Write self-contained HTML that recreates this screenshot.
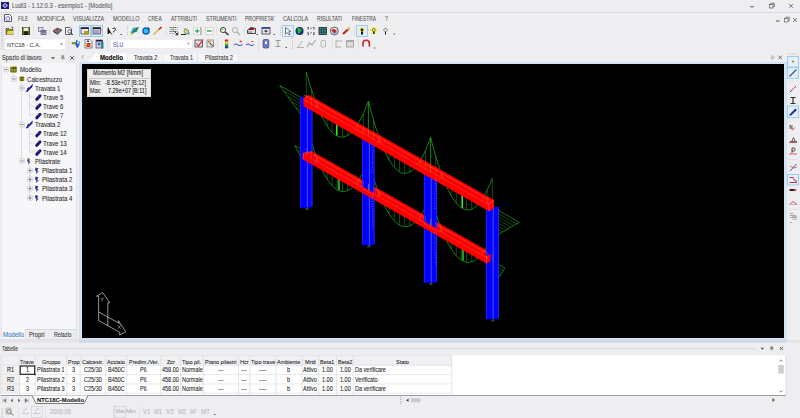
<!DOCTYPE html>
<html><head><meta charset="utf-8"><style>
html,body{margin:0;padding:0;}
body{width:800px;height:418px;position:relative;overflow:hidden;background:#eeeef1;font-family:"Liberation Sans",sans-serif;}
.t{position:absolute;white-space:nowrap;line-height:1;transform-origin:0 0;z-index:3;-webkit-text-stroke:0.08px currentColor;}
.r{position:absolute;}
svg{position:absolute;left:0;top:0;}
</style></head><body>
<svg width="800" height="418" viewBox="0 0 800 418" style="z-index:1"><rect x="1" y="2" width="8" height="7" fill="#1c1c70"/><path d="M5 2.8 L8 5.5 L5 8.2 L2 5.5Z" fill="#b8b8ee"/><circle cx="5" cy="5.5" r="1.2" fill="#5050b0"/>
<line x1="0" y1="12.5" x2="800" y2="12.5" stroke="#dcdce6" stroke-width="1"/>
<line x1="750" y1="6.8" x2="754" y2="6.8" stroke="#444" stroke-width="0.8"/>
<rect x="769.5" y="4.5" width="3.5" height="3.5" fill="none" stroke="#555" stroke-width="0.7"/><path d="M770.8 4.5 V3.2 H774.3 V6.7 H773" fill="none" stroke="#555" stroke-width="0.7"/>
<path d="M789 3.8 L793 7.8 M793 3.8 L789 7.8" stroke="#444" stroke-width="0.7"/>
<line x1="776" y1="21" x2="779.5" y2="21" stroke="#555" stroke-width="1"/>
<rect x="784.5" y="18.5" width="3.5" height="3.5" fill="none" stroke="#666" stroke-width="0.7"/><path d="M785.8 18.5 V17.2 H789.3 V20.7 H788" fill="none" stroke="#666" stroke-width="0.7"/>
<path d="M793 18 L797 22 M797 18 L793 22" stroke="#555" stroke-width="0.7"/>
<path d="M4.5 14.5 H9.5 L11.5 16.5 V21.5 H4.5Z" fill="#fff" stroke="#333" stroke-width="0.8"/><circle cx="7.8" cy="18.5" r="2" fill="none" stroke="#5a5ad8" stroke-width="0.8"/>
<rect x="1" y="14" width="1" height="1" fill="#c4c4cc"/><rect x="3" y="14" width="1" height="1" fill="#d8d8de"/>
<rect x="2" y="15" width="1" height="1" fill="#c4c4cc"/><rect x="2" y="15" width="1" height="1" fill="#d8d8de"/>
<rect x="1" y="16" width="1" height="1" fill="#c4c4cc"/><rect x="3" y="16" width="1" height="1" fill="#d8d8de"/>
<rect x="2" y="17" width="1" height="1" fill="#c4c4cc"/><rect x="2" y="17" width="1" height="1" fill="#d8d8de"/>
<rect x="1" y="18" width="1" height="1" fill="#c4c4cc"/><rect x="3" y="18" width="1" height="1" fill="#d8d8de"/>
<rect x="2" y="19" width="1" height="1" fill="#c4c4cc"/><rect x="2" y="19" width="1" height="1" fill="#d8d8de"/>
<rect x="1" y="20" width="1" height="1" fill="#c4c4cc"/><rect x="3" y="20" width="1" height="1" fill="#d8d8de"/>
<rect x="2" y="21" width="1" height="1" fill="#c4c4cc"/><rect x="2" y="21" width="1" height="1" fill="#d8d8de"/>
<rect x="1" y="22" width="1" height="1" fill="#c4c4cc"/><rect x="3" y="22" width="1" height="1" fill="#d8d8de"/>
<rect x="2" y="23" width="1" height="1" fill="#c4c4cc"/><rect x="2" y="23" width="1" height="1" fill="#d8d8de"/>
<rect x="2" y="25" width="1" height="1" fill="#c4c4cc"/><rect x="2" y="25" width="1" height="1" fill="#d8d8de"/>
<rect x="1" y="26" width="1" height="1" fill="#c4c4cc"/><rect x="3" y="26" width="1" height="1" fill="#d8d8de"/>
<rect x="2" y="27" width="1" height="1" fill="#c4c4cc"/><rect x="2" y="27" width="1" height="1" fill="#d8d8de"/>
<rect x="1" y="28" width="1" height="1" fill="#c4c4cc"/><rect x="3" y="28" width="1" height="1" fill="#d8d8de"/>
<rect x="2" y="29" width="1" height="1" fill="#c4c4cc"/><rect x="2" y="29" width="1" height="1" fill="#d8d8de"/>
<rect x="1" y="30" width="1" height="1" fill="#c4c4cc"/><rect x="3" y="30" width="1" height="1" fill="#d8d8de"/>
<rect x="2" y="31" width="1" height="1" fill="#c4c4cc"/><rect x="2" y="31" width="1" height="1" fill="#d8d8de"/>
<rect x="1" y="32" width="1" height="1" fill="#c4c4cc"/><rect x="3" y="32" width="1" height="1" fill="#d8d8de"/>
<rect x="2" y="33" width="1" height="1" fill="#c4c4cc"/><rect x="2" y="33" width="1" height="1" fill="#d8d8de"/>
<rect x="1" y="34" width="1" height="1" fill="#c4c4cc"/><rect x="3" y="34" width="1" height="1" fill="#d8d8de"/>
<rect x="2" y="35" width="1" height="1" fill="#c4c4cc"/><rect x="2" y="35" width="1" height="1" fill="#d8d8de"/>
<rect x="1" y="36" width="1" height="1" fill="#c4c4cc"/><rect x="3" y="36" width="1" height="1" fill="#d8d8de"/>
<rect x="1" y="38" width="1" height="1" fill="#c4c4cc"/><rect x="3" y="38" width="1" height="1" fill="#d8d8de"/>
<rect x="2" y="39" width="1" height="1" fill="#c4c4cc"/><rect x="2" y="39" width="1" height="1" fill="#d8d8de"/>
<rect x="1" y="40" width="1" height="1" fill="#c4c4cc"/><rect x="3" y="40" width="1" height="1" fill="#d8d8de"/>
<rect x="2" y="41" width="1" height="1" fill="#c4c4cc"/><rect x="2" y="41" width="1" height="1" fill="#d8d8de"/>
<rect x="1" y="42" width="1" height="1" fill="#c4c4cc"/><rect x="3" y="42" width="1" height="1" fill="#d8d8de"/>
<rect x="2" y="43" width="1" height="1" fill="#c4c4cc"/><rect x="2" y="43" width="1" height="1" fill="#d8d8de"/>
<rect x="1" y="44" width="1" height="1" fill="#c4c4cc"/><rect x="3" y="44" width="1" height="1" fill="#d8d8de"/>
<rect x="2" y="45" width="1" height="1" fill="#c4c4cc"/><rect x="2" y="45" width="1" height="1" fill="#d8d8de"/>
<rect x="1" y="46" width="1" height="1" fill="#c4c4cc"/><rect x="3" y="46" width="1" height="1" fill="#d8d8de"/>
<rect x="2" y="47" width="1" height="1" fill="#c4c4cc"/><rect x="2" y="47" width="1" height="1" fill="#d8d8de"/>
<rect x="1" y="48" width="1" height="1" fill="#c4c4cc"/><rect x="3" y="48" width="1" height="1" fill="#d8d8de"/>
<rect x="2" y="49" width="1" height="1" fill="#c4c4cc"/><rect x="2" y="49" width="1" height="1" fill="#d8d8de"/>
<path d="M6 28.5 H9 L10 29.5 H13 V34.5 H6Z" fill="#8a8a20" stroke="#3a3a10" stroke-width="0.6"/><path d="M6.5 34.5 L8 31 H14.5 L13 34.5Z" fill="#e0d860"/><path d="M11 27 L13 27.5 L12.5 29" fill="none" stroke="#222" stroke-width="0.6"/>
<rect x="22" y="27" width="8" height="8" fill="#3a3a12"/><rect x="23.2" y="27.6" width="5.6" height="3.4" fill="#e8e8e0"/><rect x="22.8" y="27.4" width="0.8" height="7" fill="#8a8a30"/><rect x="28.4" y="27.4" width="0.8" height="7" fill="#8a8a30"/><rect x="24.5" y="32.2" width="3" height="2.6" fill="#111"/>
<line x1="18.5" y1="26" x2="18.5" y2="36" stroke="#dcdce2" stroke-width="0.8"/>
<line x1="33.5" y1="26" x2="33.5" y2="36" stroke="#dcdce2" stroke-width="0.8"/>
<rect x="38.5" y="27.5" width="4.5" height="4" fill="#dde" stroke="#556" stroke-width="0.6"/><rect x="41" y="30.5" width="5" height="4" fill="#aab" stroke="#335" stroke-width="0.6"/><rect x="42" y="31.5" width="3" height="1" fill="#33a"/>
<line x1="49.5" y1="26" x2="49.5" y2="36" stroke="#dcdce2" stroke-width="0.8"/>
<path d="M53 31 L57 28 L62 30 L58 34Z" fill="#777" stroke="#333" stroke-width="0.7"/><path d="M56 29.5 L59 30" stroke="#d22" stroke-width="1"/><path d="M54 32 L57.5 34.5" stroke="#222" stroke-width="0.8"/>
<path d="M65.5 27.5 H70 L71.5 29 V34.5 H65.5Z" fill="#fff" stroke="#222" stroke-width="0.7"/><circle cx="69.5" cy="31.5" r="1.8" fill="none" stroke="#226" stroke-width="0.8"/><line x1="70.7" y1="32.8" x2="73" y2="35" stroke="#222" stroke-width="0.9"/>
<rect x="79.5" y="25.5" width="11" height="11" fill="#e4eef8" stroke="#9fcbef" stroke-width="1"/>
<rect x="91.5" y="25.5" width="11" height="11" fill="#e4eef8" stroke="#9fcbef" stroke-width="1"/>
<rect x="81" y="27.5" width="7.5" height="6.5" fill="#e8e8f0" stroke="#334" stroke-width="0.7"/><rect x="81" y="27.5" width="7.5" height="1.5" fill="#223"/><path d="M84 31 H88.5 V35 H84Z" fill="#b0a020"/>
<rect x="93" y="27.5" width="7.5" height="6.5" fill="#ccccd8" stroke="#334" stroke-width="0.7"/><rect x="93" y="27.5" width="7.5" height="1.5" fill="#223"/><path d="M94 31 H99 M94 33 H99" stroke="#6677aa" stroke-width="0.8"/><rect x="100" y="29" width="1.5" height="1.5" fill="#d33"/>
<path d="M108 27.5 L108 34 L110 32 L112 34.5" fill="#111" stroke="#111" stroke-width="0.8"/><path d="M112.5 28.5 Q115.5 27 115.5 29.5 Q115 31 113.5 31.5 V32.5" fill="none" stroke="#223" stroke-width="1"/>
<rect x="120.5" y="34" width="1.5" height="1" fill="#555"/>
<rect x="127" y="26" width="1" height="1" fill="#c0c0c8"/>
<rect x="127" y="28" width="1" height="1" fill="#c0c0c8"/>
<rect x="127" y="30" width="1" height="1" fill="#c0c0c8"/>
<rect x="127" y="32" width="1" height="1" fill="#c0c0c8"/>
<rect x="127" y="34" width="1" height="1" fill="#c0c0c8"/>
<path d="M130.5 33 L133 28 L138.5 27 L137 32Z" fill="#2aa8a0"/><path d="M131 34.5 L138.5 27.5" stroke="#333" stroke-width="1"/><rect x="130.5" y="33.5" width="1.5" height="1.5" fill="#dd0"/>
<circle cx="146" cy="31" r="3.8" fill="#1060c0"/><circle cx="146" cy="31" r="2.3" fill="#30c0f0"/><path d="M148 27 L150 29 L148 30" fill="#0a3a90"/>
<path d="M153.5 34.5 L161.5 27" stroke="#d8c040" stroke-width="1.6"/><path d="M159 29.5 L161.5 27" stroke="#d02020" stroke-width="1.6"/>
<line x1="166.5" y1="26" x2="166.5" y2="36" stroke="#dcdce2" stroke-width="0.8"/>
<path d="M169.5 27.5 H177.5 M169.5 31.5 H177.5" stroke="#333" stroke-width="0.8" stroke-dasharray="1.2 0.6"/><path d="M169.5 29.5 H177.5 M169.5 33.5 H175" stroke="#777" stroke-width="0.7" stroke-dasharray="1.2 0.6"/><rect x="171.5" y="28.6" width="2.5" height="1.8" fill="#6ab86a"/><path d="M174.5 31.5 L177.8 34.8 M177.8 32.5 V34.8 H175.5" fill="none" stroke="#111" stroke-width="0.9"/>
<line x1="181" y1="34.5" x2="186" y2="34.5" stroke="#111" stroke-width="0.9"/><path d="M184 31 Q184.5 28 186 28.5 L186.5 30 L188.5 30.5 Q189.5 33 187 34 L185 33.5Z" fill="#e0dc80" stroke="#333" stroke-width="0.5"/><circle cx="188.5" cy="33.5" r="1.3" fill="#3ab8b0"/>
<rect x="193.5" y="27.5" width="7.5" height="7" fill="#fafafa" stroke="#999" stroke-width="0.6" stroke-dasharray="0.8 0.8"/><line x1="200.8" y1="27.5" x2="200.8" y2="34.5" stroke="#333" stroke-width="0.7" stroke-dasharray="0.9 0.7"/><path d="M195 31 H199.5 M197.2 29 V33" stroke="#1a9a2a" stroke-width="1.1"/>
<rect x="205.5" y="27.5" width="7.5" height="7" fill="#fafafa" stroke="#999" stroke-width="0.6" stroke-dasharray="0.8 0.8"/><path d="M207 31 H211.5" stroke="#1a9a2a" stroke-width="1.2"/>
<line x1="216.5" y1="26" x2="216.5" y2="36" stroke="#dcdce2" stroke-width="0.8"/>
<circle cx="223" cy="30" r="2.6" fill="#f4f4f4" stroke="#333" stroke-width="0.9"/><line x1="225" y1="32" x2="228.5" y2="35" stroke="#222" stroke-width="1.3"/><circle cx="222.5" cy="29.5" r="1" fill="#6c6"/>
<circle cx="235" cy="30" r="2.6" fill="none" stroke="#aaa" stroke-width="0.9"/><line x1="237" y1="32" x2="240" y2="35" stroke="#aaa" stroke-width="1.2"/>
<line x1="244.5" y1="26" x2="244.5" y2="36" stroke="#dcdce2" stroke-width="0.8"/>
<path d="M247.5 30 L251 27.5 L255.5 28.5 V33.5 H247.5Z" fill="#ddd" stroke="#222" stroke-width="0.8"/><path d="M251 27.5 L255.5 28.5 L253 30 L248 30Z" fill="#8a1a1a"/><path d="M249 31 V33.5 M251 31 V33.5" stroke="#333" stroke-width="0.6"/>
<rect x="256.5" y="34" width="1.5" height="1" fill="#555"/>
<rect x="262" y="27.5" width="8" height="6.5" fill="#e8e8f4" stroke="#223" stroke-width="0.7"/><rect x="262" y="27.5" width="8" height="1.3" fill="#1a3aa0"/><path d="M264 31 L266 30 L268 31 L266 32.5Z" fill="#333"/>
<rect x="273.5" y="34" width="1.5" height="1" fill="#555"/>
<rect x="280" y="26" width="1" height="1" fill="#c0c0c8"/>
<rect x="280" y="28" width="1" height="1" fill="#c0c0c8"/>
<rect x="280" y="30" width="1" height="1" fill="#c0c0c8"/>
<rect x="280" y="32" width="1" height="1" fill="#c0c0c8"/>
<rect x="280" y="34" width="1" height="1" fill="#c0c0c8"/>
<rect x="282.5" y="25.5" width="11" height="11" fill="#e4eef8" stroke="#9fcbef" stroke-width="1"/>
<path d="M285.5 27.5 L285.5 34 L287.3 32.5 L289 35 L290.2 34.3 L288.6 31.8 L290.8 31.5Z" fill="#fff" stroke="#222" stroke-width="0.6"/>
<circle cx="299.5" cy="31" r="4" fill="#0a2a80"/><path d="M297 28.5 L300 28 L302 30 L300 33 L298 34 L297.5 31Z" fill="#2ab02a"/>
<path d="M309 27.5 H308 V29.5 M308 32 V34.5 H309 M313 27.5 H314 V29.5 M314 32 V34.5 H313" fill="none" stroke="#333" stroke-width="0.9"/><path d="M310 29 L312 28 M310 33.5 L312 32" stroke="#333" stroke-width="0.6"/>
<rect x="319" y="27.5" width="7.5" height="7" fill="#3a9aa0" stroke="#222" stroke-width="0.8"/><path d="M319 29.8 H326.5 M319 32.2 H326.5 M321.5 27.5 V34.5 M324 27.5 V34.5" stroke="#222" stroke-width="0.6"/>
<circle cx="334.3" cy="31" r="4" fill="#ddd" stroke="#333" stroke-width="0.7"/><path d="M331 30 L334 29 L337 31 L334 33Z" fill="#c02020"/><path d="M332 33 L335 33.5 L337 32" fill="#2a3ab0"/>
<path d="M343 34 L349.5 28" stroke="#c02020" stroke-width="2"/><path d="M347.5 29.5 L349.5 27.5" stroke="#e8d040" stroke-width="1.8"/>
<line x1="354.5" y1="26" x2="354.5" y2="36" stroke="#dcdce2" stroke-width="0.8"/>
<rect x="356.5" y="25.5" width="11" height="11" fill="#e4eef8" stroke="#9fcbef" stroke-width="1"/>
<circle cx="362" cy="29.8" r="2.6" fill="#f0f040"/><path d="M361 31.5 H363 V34.5 H361Z" fill="#111"/><circle cx="362" cy="29.8" r="1.4" fill="#111"/>
<circle cx="373.8" cy="30.5" r="3.4" fill="#f0f040" opacity="0.85"/><circle cx="373.8" cy="30" r="1.5" fill="none" stroke="#554" stroke-width="0.7"/><rect x="373" y="31.5" width="1.6" height="2.5" fill="#333"/>
<path d="M385.5 28 L387.5 30 L385.5 32 L383.5 30Z" fill="#fff" stroke="#333" stroke-width="0.7"/><rect x="385" y="32" width="1" height="2.5" fill="#111"/>
<rect x="393.5" y="33.5" width="1.5" height="1" fill="#555"/>
<rect x="5" y="39" width="60.5" height="10.5" fill="#fff" stroke="#e4e4ea" stroke-width="0.6"/>
<path d="M60.2 43.6 L62.8 43.6 L61.5 45Z" fill="#555"/>
<line x1="68.5" y1="38" x2="68.5" y2="50" stroke="#dcdce2" stroke-width="0.8"/>
<path d="M72 42.5 H76 V44 H72Z" fill="#c8b020" stroke="#333" stroke-width="0.4"/><path d="M76 40 L80 42 L79 46 L77 48.5 L75.5 45Z" fill="#1a6ad0"/><circle cx="78" cy="42.5" r="1" fill="#fff"/>
<path d="M85 39.5 H90 L92 41.5 V48 H85Z" fill="#fff" stroke="#333" stroke-width="0.6"/><path d="M86.5 43 H90.5 V47 H86.5Z" fill="#d02020"/><path d="M87 43.5 L90 46.5" stroke="#ff0" stroke-width="0.7"/><rect x="87" y="40.5" width="2" height="1.5" fill="#2a2aa0"/>
<rect x="96" y="40" width="6.5" height="8" fill="#ccd" stroke="#335" stroke-width="0.6"/><rect x="96" y="40" width="6.5" height="1.5" fill="#223"/><path d="M97.5 44 H100.5 M99 42.5 V45.5" stroke="#1a3aa0" stroke-width="0.9"/><rect x="101" y="42" width="2.5" height="6.5" fill="#2a8a90"/>
<line x1="107.5" y1="38" x2="107.5" y2="50" stroke="#dcdce2" stroke-width="0.8"/>
<rect x="110.8" y="39.2" width="81.5" height="9.5" fill="#fff" stroke="#e4e4ea" stroke-width="0.6"/>
<path d="M187.2 43.2 L189.8 43.2 L188.5 44.6Z" fill="#555"/>
<rect x="195" y="40" width="7.5" height="7" fill="#ddd" stroke="#444" stroke-width="0.8"/><path d="M196.5 43.5 L198.5 46 L203 39.5" fill="none" stroke="#d02020" stroke-width="1.1"/>
<rect x="207" y="40" width="6.5" height="7" fill="#e4e4e8" stroke="#666" stroke-width="0.6"/><path d="M208 41 L213 46.5" stroke="#222" stroke-width="1"/><circle cx="209.5" cy="42" r="1.2" fill="#e8a020"/>
<line x1="217.5" y1="38" x2="217.5" y2="50" stroke="#dcdce2" stroke-width="0.8"/>
<rect x="225" y="39.5" width="3.2" height="2.2" fill="#e02020"/><rect x="225" y="41.7" width="3.2" height="2.2" fill="#e8d020"/><rect x="225" y="43.9" width="3.2" height="2.2" fill="#20b020"/><rect x="225" y="46.1" width="3.2" height="2.2" fill="#2030c0"/>
<path d="M234 45 Q236 42.5 238 45 Q240 46.5 242.5 44.5" fill="none" stroke="#2a4ad0" stroke-width="1"/><path d="M239.5 41.5 H242 M240.8 40.3 V42.7" stroke="#e02020" stroke-width="0.7"/>
<path d="M246 45 Q248 42.5 250 45 Q252 46.5 254 44.5" fill="none" stroke="#2a4ad0" stroke-width="1"/><path d="M251 41.5 H253.5" stroke="#e02020" stroke-width="0.7"/>
<line x1="258.5" y1="38" x2="258.5" y2="50" stroke="#dcdce2" stroke-width="0.8"/>
<rect x="263" y="39.5" width="5.8" height="8.5" rx="1.2" fill="#6a7ad8" stroke="#334" stroke-width="0.6"/><rect x="265" y="41.5" width="2" height="2.5" fill="#fff"/>
<path d="M275.5 40.5 H280.5 M278 40.5 V46.5 M275.5 46.5 H280.5" stroke="#999" stroke-width="1"/>
<rect x="285.5" y="47" width="1.5" height="1" fill="#555"/>
<rect x="292" y="38" width="1" height="1" fill="#c0c0c8"/>
<rect x="292" y="40" width="1" height="1" fill="#c0c0c8"/>
<rect x="292" y="42" width="1" height="1" fill="#c0c0c8"/>
<rect x="292" y="44" width="1" height="1" fill="#c0c0c8"/>
<rect x="292" y="46" width="1" height="1" fill="#c0c0c8"/>
<rect x="292" y="48" width="1" height="1" fill="#c0c0c8"/>
<path d="M297.5 47.5 L302.5 41 M297 47.5 H304" stroke="#aaa" stroke-width="0.9"/>
<path d="M307 47 L309.5 43 L312 45 L315.5 40" fill="none" stroke="#aaa" stroke-width="1.3"/>
<rect x="321" y="40.5" width="4.5" height="6.5" rx="1" fill="none" stroke="#aaa" stroke-width="0.8"/>
<line x1="332.5" y1="38" x2="332.5" y2="50" stroke="#dcdce2" stroke-width="0.8"/>
<path d="M336 40.5 V47.5 M336 41 H342.5 M336 47 H341" stroke="#999" stroke-width="0.8"/>
<rect x="346.5" y="40.5" width="7" height="6.5" fill="#ddd" stroke="#999" stroke-width="0.8"/><rect x="346.5" y="40.5" width="7" height="1.5" fill="#aaa"/>
<line x1="358.5" y1="38" x2="358.5" y2="50" stroke="#dcdce2" stroke-width="0.8"/>
<path d="M363 46 V43.5 A3.2 3.2 0 0 1 369.4 43.5 V46" fill="none" stroke="#d02020" stroke-width="1.6"/><rect x="362.2" y="45.5" width="1.6" height="1.5" fill="#888"/><rect x="368.6" y="45.5" width="1.6" height="1.5" fill="#888"/>
<rect x="373.8" y="47.5" width="1.5" height="1" fill="#555"/>
<path d="M51 57.3 H55 L53 59.3Z" fill="#444"/>
<path d="M61.8 55.5 H63.8 V58 H64.5 V58.6 H61 V58 H61.8Z M62.8 58.6 V60.3" fill="#888" stroke="#888" stroke-width="0.4"/>
<path d="M70.3 56.2 L73.8 59.7 M73.8 56.2 L70.3 59.7" stroke="#444" stroke-width="0.9"/><path d="M88 62 L95.5 53.5 H126.5 V62Z" fill="#fff"/>
<path d="M127.5 62 V55 Q127.5 53.5 129 53.5 H160.5 Q162 53.5 162 55 V62Z" fill="#f6f6f9" stroke="#e0e0e8" stroke-width="0.5"/>
<path d="M162.8 62 V55 Q162.8 53.5 164.3 53.5 H195.5 Q197 53.5 197 55 V62Z" fill="#f6f6f9" stroke="#e0e0e8" stroke-width="0.5"/>
<path d="M198 62 V55 Q198 53.5 199.5 53.5 H236.5 Q238 53.5 238 55 V62Z" fill="#f6f6f9" stroke="#e0e0e8" stroke-width="0.5"/>
<path d="M83.5 55 L82 56.8 L83.5 58.6" fill="none" stroke="#888" stroke-width="0.7"/>
<path d="M771.8 55.5 L774.5 57.5 L771.8 59.5Z" fill="none" stroke="#888" stroke-width="0.6"/>
<path d="M778.5 55.7 L782 59.3 M782 55.7 L778.5 59.3" stroke="#555" stroke-width="0.8"/><line x1="13.5" y1="73.5" x2="13.5" y2="77" stroke="#d4d4da" stroke-width="0.8"/>
<line x1="21.5" y1="82.5" x2="21.5" y2="159" stroke="#d4d4da" stroke-width="0.8"/>
<line x1="29.5" y1="92" x2="29.5" y2="115.39999999999999" stroke="#d4d4da" stroke-width="0.8"/>
<line x1="29.5" y1="128" x2="29.5" y2="152.04" stroke="#d4d4da" stroke-width="0.8"/>
<line x1="29.5" y1="164.5" x2="29.5" y2="196" stroke="#d4d4da" stroke-width="0.8"/>
<line x1="29.5" y1="97.0" x2="34.5" y2="97.0" stroke="#d4d4da" stroke-width="0.8"/>
<line x1="29.5" y1="106.0" x2="34.5" y2="106.0" stroke="#d4d4da" stroke-width="0.8"/>
<line x1="29.5" y1="115.0" x2="34.5" y2="115.0" stroke="#d4d4da" stroke-width="0.8"/>
<line x1="29.5" y1="134.0" x2="34.5" y2="134.0" stroke="#d4d4da" stroke-width="0.8"/>
<line x1="29.5" y1="143.0" x2="34.5" y2="143.0" stroke="#d4d4da" stroke-width="0.8"/>
<line x1="29.5" y1="152.0" x2="34.5" y2="152.0" stroke="#d4d4da" stroke-width="0.8"/>
<rect x="3.6" y="67.2" width="4.8" height="4.6" rx="0.8" fill="#f4f4f6" stroke="#c4c4cc" stroke-width="0.7"/>
<line x1="4.6" y1="69.5" x2="7.4" y2="69.5" stroke="#666" stroke-width="0.8"/>
<rect x="10.3" y="66.2" width="6.4" height="6.4" rx="1" fill="#5c5c14"/><path d="M10.8 68.0 Q11 66.5 13 66.3 H16.3" fill="none" stroke="#e8e060" stroke-width="1.1"/><path d="M12 72.3 V69.0 L13.5 70.5 L15 69.0 V72.3" fill="none" stroke="#d8d050" stroke-width="0.7"/>
<rect x="11.6" y="76.7" width="4.8" height="4.6" rx="0.8" fill="#f4f4f6" stroke="#c4c4cc" stroke-width="0.7"/>
<line x1="12.6" y1="79.0" x2="15.4" y2="79.0" stroke="#666" stroke-width="0.8"/>
<rect x="19.8" y="76.7" width="4.2" height="4.4" rx="0.6" fill="#3e3e10" stroke="#c8c040" stroke-width="0.6"/><path d="M20.8 80.4 V78.2 L21.9 79.4 L23 78.2 V80.4" fill="none" stroke="#d8d050" stroke-width="0.5"/>
<rect x="19.6" y="85.7" width="4.8" height="4.6" rx="0.8" fill="#f4f4f6" stroke="#c4c4cc" stroke-width="0.7"/>
<line x1="20.6" y1="88.0" x2="23.4" y2="88.0" stroke="#666" stroke-width="0.8"/>
<path d="M26 91.5 L28 89.0 L32.5 84.5 L32 87.0 L27.5 91.5Z" fill="#1a1a9a" stroke="#1a1a9a" stroke-width="0.6"/><path d="M27 89.0 L29 87.5" stroke="#1a1a9a" stroke-width="1"/>
<line x1="36.8" y1="99.3" x2="40" y2="95.8" stroke="#14146e" stroke-width="3" stroke-linecap="round"/><line x1="37.5" y1="97.6" x2="39.6" y2="95.4" stroke="#7a7ad0" stroke-width="0.5"/>
<line x1="36.8" y1="108.3" x2="40" y2="104.8" stroke="#14146e" stroke-width="3" stroke-linecap="round"/><line x1="37.5" y1="106.6" x2="39.6" y2="104.4" stroke="#7a7ad0" stroke-width="0.5"/>
<line x1="36.8" y1="117.8" x2="40" y2="114.3" stroke="#14146e" stroke-width="3" stroke-linecap="round"/><line x1="37.5" y1="116.1" x2="39.6" y2="113.9" stroke="#7a7ad0" stroke-width="0.5"/>
<rect x="19.6" y="122.2" width="4.8" height="4.6" rx="0.8" fill="#f4f4f6" stroke="#c4c4cc" stroke-width="0.7"/>
<line x1="20.6" y1="124.5" x2="23.4" y2="124.5" stroke="#666" stroke-width="0.8"/>
<path d="M26 128.0 L28 125.5 L32.5 121.0 L32 123.5 L27.5 128.0Z" fill="#1a1a9a" stroke="#1a1a9a" stroke-width="0.6"/><path d="M27 125.5 L29 124.0" stroke="#1a1a9a" stroke-width="1"/>
<line x1="36.8" y1="135.8" x2="40" y2="132.3" stroke="#14146e" stroke-width="3" stroke-linecap="round"/><line x1="37.5" y1="134.1" x2="39.6" y2="131.9" stroke="#7a7ad0" stroke-width="0.5"/>
<line x1="36.8" y1="145.3" x2="40" y2="141.8" stroke="#14146e" stroke-width="3" stroke-linecap="round"/><line x1="37.5" y1="143.6" x2="39.6" y2="141.4" stroke="#7a7ad0" stroke-width="0.5"/>
<line x1="36.8" y1="154.3" x2="40" y2="150.8" stroke="#14146e" stroke-width="3" stroke-linecap="round"/><line x1="37.5" y1="152.6" x2="39.6" y2="150.4" stroke="#7a7ad0" stroke-width="0.5"/>
<rect x="19.6" y="158.7" width="4.8" height="4.6" rx="0.8" fill="#f4f4f6" stroke="#c4c4cc" stroke-width="0.7"/>
<line x1="20.6" y1="161.0" x2="23.4" y2="161.0" stroke="#666" stroke-width="0.8"/>
<path d="M27.5 158.0 L30 159.0 L29 161.0 L30.5 162.0 L28 164.5 L28.5 162.0 L27 161.0Z" fill="#2a2a9a"/><rect x="27" y="158.0" width="1.5" height="2" fill="#c8b030"/>
<rect x="27.6" y="168.2" width="4.8" height="4.6" rx="0.8" fill="#f4f4f6" stroke="#c4c4cc" stroke-width="0.7"/>
<line x1="28.6" y1="170.5" x2="31.4" y2="170.5" stroke="#666" stroke-width="0.8"/>
<line x1="30" y1="169.1" x2="30" y2="171.9" stroke="#666" stroke-width="0.8"/>
<path d="M35.5 167.5 L38.5 168.5 L37 170.5 L38.5 171.5 L36 174.0 L36.5 171.5 L35 170.5Z" fill="#2a2aa0"/>
<rect x="27.6" y="177.2" width="4.8" height="4.6" rx="0.8" fill="#f4f4f6" stroke="#c4c4cc" stroke-width="0.7"/>
<line x1="28.6" y1="179.5" x2="31.4" y2="179.5" stroke="#666" stroke-width="0.8"/>
<line x1="30" y1="178.1" x2="30" y2="180.9" stroke="#666" stroke-width="0.8"/>
<path d="M35.5 176.5 L38.5 177.5 L37 179.5 L38.5 180.5 L36 183.0 L36.5 180.5 L35 179.5Z" fill="#2a2aa0"/>
<rect x="27.6" y="186.2" width="4.8" height="4.6" rx="0.8" fill="#f4f4f6" stroke="#c4c4cc" stroke-width="0.7"/>
<line x1="28.6" y1="188.5" x2="31.4" y2="188.5" stroke="#666" stroke-width="0.8"/>
<line x1="30" y1="187.1" x2="30" y2="189.9" stroke="#666" stroke-width="0.8"/>
<path d="M35.5 185.5 L38.5 186.5 L37 188.5 L38.5 189.5 L36 192.0 L36.5 189.5 L35 188.5Z" fill="#2a2aa0"/>
<rect x="27.6" y="195.7" width="4.8" height="4.6" rx="0.8" fill="#f4f4f6" stroke="#c4c4cc" stroke-width="0.7"/>
<line x1="28.6" y1="198.0" x2="31.4" y2="198.0" stroke="#666" stroke-width="0.8"/>
<line x1="30" y1="196.6" x2="30" y2="199.4" stroke="#666" stroke-width="0.8"/>
<path d="M35.5 195.0 L38.5 196.0 L37 198.0 L38.5 199.0 L36 201.5 L36.5 199.0 L35 198.0Z" fill="#2a2aa0"/><path d="M306.30 125.74 L307.59 130.26 L308.89 134.63 L310.18 138.84 L311.48 142.88 L312.77 146.76 L314.06 150.48 L315.36 154.04 L316.65 157.44 L317.94 160.68 L319.24 163.75 L320.53 166.66 L321.82 169.41 L323.12 172.01 L324.41 174.43 L325.71 176.70 L327.00 178.81 L328.29 180.75 L329.59 182.53 L330.88 184.16 L332.18 185.62 L333.47 186.92 L334.76 188.05 L336.06 189.03 L337.35 189.84 L338.64 190.50 L339.94 190.99 L341.23 191.32 L342.52 191.49 L343.82 191.49 L345.11 191.34 L346.41 191.02 L347.70 190.54 L348.99 189.91 L350.29 189.11 L351.58 188.14 L352.88 187.02 L354.17 185.74 L355.46 184.29 L356.76 182.68 L358.05 180.91 L359.34 178.98 L360.64 176.89 L361.93 174.64 L363.22 172.22 L364.52 169.65 L365.81 166.91 L367.11 164.01 L368.40 160.95" fill="none" stroke="#2ac02a" stroke-width="0.65" opacity="1"/>
<path d="M306.30 155.74 V125.74" fill="none" stroke="#1aa81a" stroke-width="0.5" opacity="1"/>
<path d="M311.48 158.67 V142.88" fill="none" stroke="#1aa81a" stroke-width="0.5" opacity="1"/>
<path d="M316.65 161.61 V157.44" fill="none" stroke="#1aa81a" stroke-width="0.5" opacity="1"/>
<path d="M321.82 164.54 V169.41" fill="none" stroke="#1aa81a" stroke-width="0.5" opacity="1"/>
<path d="M327.00 167.47 V178.81" fill="none" stroke="#1aa81a" stroke-width="0.5" opacity="1"/>
<path d="M332.18 170.41 V185.62" fill="none" stroke="#1aa81a" stroke-width="0.5" opacity="1"/>
<path d="M337.35 173.34 V189.84" fill="none" stroke="#1aa81a" stroke-width="0.5" opacity="1"/>
<path d="M342.52 176.28 V191.49" fill="none" stroke="#1aa81a" stroke-width="0.5" opacity="1"/>
<path d="M347.70 179.21 V190.54" fill="none" stroke="#1aa81a" stroke-width="0.5" opacity="1"/>
<path d="M352.88 182.15 V187.02" fill="none" stroke="#1aa81a" stroke-width="0.5" opacity="1"/>
<path d="M358.05 185.08 V180.91" fill="none" stroke="#1aa81a" stroke-width="0.5" opacity="1"/>
<path d="M363.22 188.01 V172.22" fill="none" stroke="#1aa81a" stroke-width="0.5" opacity="1"/>
<path d="M368.40 190.95 V160.95" fill="none" stroke="#1aa81a" stroke-width="0.5" opacity="1"/>
<path d="M339.00 176.28 V190.15" stroke="#3cff3c" stroke-width="1.2"/>
<path d="M368.40 160.95 L369.70 165.48 L370.99 169.84 L372.29 174.05 L373.58 178.10 L374.88 181.98 L376.17 185.70 L377.47 189.26 L378.77 192.66 L380.06 195.90 L381.36 198.97 L382.65 201.89 L383.95 204.64 L385.25 207.23 L386.54 209.66 L387.84 211.93 L389.13 214.04 L390.43 215.98 L391.73 217.77 L393.02 219.39 L394.32 220.85 L395.61 222.15 L396.91 223.29 L398.20 224.27 L399.50 225.08 L400.80 225.74 L402.09 226.23 L403.39 226.56 L404.68 226.73 L405.98 226.74 L407.27 226.58 L408.57 226.27 L409.87 225.79 L411.16 225.16 L412.46 224.36 L413.75 223.40 L415.05 222.27 L416.35 220.99 L417.64 219.54 L418.94 217.94 L420.23 216.17 L421.53 214.24 L422.83 212.15 L424.12 209.90 L425.42 207.48 L426.71 204.91 L428.01 202.17 L429.30 199.27 L430.60 196.22" fill="none" stroke="#2ac02a" stroke-width="0.65" opacity="1"/>
<path d="M368.40 190.95 V160.95" fill="none" stroke="#1aa81a" stroke-width="0.5" opacity="1"/>
<path d="M373.58 193.89 V178.10" fill="none" stroke="#1aa81a" stroke-width="0.5" opacity="1"/>
<path d="M378.77 196.83 V192.66" fill="none" stroke="#1aa81a" stroke-width="0.5" opacity="1"/>
<path d="M383.95 199.76 V204.64" fill="none" stroke="#1aa81a" stroke-width="0.5" opacity="1"/>
<path d="M389.13 202.70 V214.04" fill="none" stroke="#1aa81a" stroke-width="0.5" opacity="1"/>
<path d="M394.32 205.64 V220.85" fill="none" stroke="#1aa81a" stroke-width="0.5" opacity="1"/>
<path d="M399.50 208.58 V225.08" fill="none" stroke="#1aa81a" stroke-width="0.5" opacity="1"/>
<path d="M404.68 211.52 V226.73" fill="none" stroke="#1aa81a" stroke-width="0.5" opacity="1"/>
<path d="M409.87 214.46 V225.79" fill="none" stroke="#1aa81a" stroke-width="0.5" opacity="1"/>
<path d="M415.05 217.40 V222.27" fill="none" stroke="#1aa81a" stroke-width="0.5" opacity="1"/>
<path d="M420.23 220.34 V216.17" fill="none" stroke="#1aa81a" stroke-width="0.5" opacity="1"/>
<path d="M425.42 223.28 V207.48" fill="none" stroke="#1aa81a" stroke-width="0.5" opacity="1"/>
<path d="M430.60 226.22 V196.22" fill="none" stroke="#1aa81a" stroke-width="0.5" opacity="1"/>
<path d="M430.60 196.22 L431.89 200.66 L433.17 204.95 L434.46 209.08 L435.74 213.06 L437.03 216.89 L438.31 220.56 L439.60 224.07 L440.88 227.43 L442.17 230.64 L443.45 233.69 L444.74 236.59 L446.03 239.34 L447.31 241.93 L448.60 244.36 L449.88 246.64 L451.17 248.77 L452.45 250.74 L453.74 252.55 L455.02 254.21 L456.31 255.72 L457.59 257.08 L458.88 258.27 L460.16 259.32 L461.45 260.21 L462.74 260.94 L464.02 261.52 L465.31 261.95 L466.59 262.22 L467.88 262.34 L469.16 262.30 L470.45 262.11 L471.73 261.76 L473.02 261.26 L474.30 260.60 L475.59 259.79 L476.88 258.83 L478.16 257.71 L479.45 256.44 L480.73 255.01 L482.02 253.42 L483.30 251.69 L484.59 249.79 L485.87 247.75 L487.16 245.55 L488.44 243.19 L489.73 240.68 L491.01 238.02 L492.30 235.20" fill="none" stroke="#2ac02a" stroke-width="0.65" opacity="1"/>
<path d="M430.60 226.22 V196.22" fill="none" stroke="#1aa81a" stroke-width="0.5" opacity="1"/>
<path d="M435.74 229.13 V213.06" fill="none" stroke="#1aa81a" stroke-width="0.5" opacity="1"/>
<path d="M440.88 232.05 V227.43" fill="none" stroke="#1aa81a" stroke-width="0.5" opacity="1"/>
<path d="M446.03 234.96 V239.34" fill="none" stroke="#1aa81a" stroke-width="0.5" opacity="1"/>
<path d="M451.17 237.88 V248.77" fill="none" stroke="#1aa81a" stroke-width="0.5" opacity="1"/>
<path d="M456.31 240.79 V255.72" fill="none" stroke="#1aa81a" stroke-width="0.5" opacity="1"/>
<path d="M461.45 243.71 V260.21" fill="none" stroke="#1aa81a" stroke-width="0.5" opacity="1"/>
<path d="M466.59 246.62 V262.22" fill="none" stroke="#1aa81a" stroke-width="0.5" opacity="1"/>
<path d="M471.73 249.54 V261.76" fill="none" stroke="#1aa81a" stroke-width="0.5" opacity="1"/>
<path d="M476.88 252.45 V258.83" fill="none" stroke="#1aa81a" stroke-width="0.5" opacity="1"/>
<path d="M482.02 255.37 V253.42" fill="none" stroke="#1aa81a" stroke-width="0.5" opacity="1"/>
<path d="M487.16 258.28 V245.55" fill="none" stroke="#1aa81a" stroke-width="0.5" opacity="1"/>
<path d="M492.30 261.20 V235.20" fill="none" stroke="#1aa81a" stroke-width="0.5" opacity="1"/>
<path d="M463.00 246.59 V260.57" stroke="#3cff3c" stroke-width="1.2"/>
<path d="M306.30 71.94 L307.59 76.58 L308.89 81.06 L310.18 85.36 L311.48 89.50 L312.77 93.46 L314.06 97.24 L315.36 100.86 L316.65 104.31 L317.94 107.58 L319.24 110.68 L320.53 113.61 L321.82 116.36 L323.12 118.95 L324.41 121.36 L325.71 123.60 L327.00 125.67 L328.29 127.57 L329.59 129.30 L330.88 130.85 L332.18 132.23 L333.47 133.44 L334.76 134.48 L336.06 135.35 L337.35 136.04 L338.64 136.57 L339.94 136.92 L341.23 137.09 L342.52 137.10 L343.82 136.94 L345.11 136.60 L346.41 136.09 L347.70 135.41 L348.99 134.56 L350.29 133.53 L351.58 132.34 L352.88 130.97 L354.17 129.43 L355.46 127.72 L356.76 125.83 L358.05 123.78 L359.34 121.55 L360.64 119.15 L361.93 116.58 L363.22 113.84 L364.52 110.92 L365.81 107.84 L367.11 104.58 L368.40 101.15" fill="none" stroke="#2ac02a" stroke-width="0.65" opacity="1"/>
<path d="M306.30 101.94 V71.94" fill="none" stroke="#1aa81a" stroke-width="0.5" opacity="1"/>
<path d="M311.48 104.87 V89.50" fill="none" stroke="#1aa81a" stroke-width="0.5" opacity="1"/>
<path d="M316.65 107.81 V104.31" fill="none" stroke="#1aa81a" stroke-width="0.5" opacity="1"/>
<path d="M321.82 110.74 V116.36" fill="none" stroke="#1aa81a" stroke-width="0.5" opacity="1"/>
<path d="M327.00 113.67 V125.67" fill="none" stroke="#1aa81a" stroke-width="0.5" opacity="1"/>
<path d="M332.18 116.61 V132.23" fill="none" stroke="#1aa81a" stroke-width="0.5" opacity="1"/>
<path d="M337.35 119.54 V136.04" fill="none" stroke="#1aa81a" stroke-width="0.5" opacity="1"/>
<path d="M342.52 122.48 V137.10" fill="none" stroke="#1aa81a" stroke-width="0.5" opacity="1"/>
<path d="M347.70 125.41 V135.41" fill="none" stroke="#1aa81a" stroke-width="0.5" opacity="1"/>
<path d="M352.88 128.35 V130.97" fill="none" stroke="#1aa81a" stroke-width="0.5" opacity="1"/>
<path d="M358.05 131.28 V123.78" fill="none" stroke="#1aa81a" stroke-width="0.5" opacity="1"/>
<path d="M363.22 134.21 V113.84" fill="none" stroke="#1aa81a" stroke-width="0.5" opacity="1"/>
<path d="M368.40 137.15 V101.15" fill="none" stroke="#1aa81a" stroke-width="0.5" opacity="1"/>
<path d="M336.70 121.17 V135.22" stroke="#3cff3c" stroke-width="1.2"/>
<path d="M368.40 101.15 L369.70 106.19 L370.99 111.04 L372.29 115.72 L373.58 120.21 L374.88 124.52 L376.17 128.65 L377.47 132.60 L378.77 136.36 L380.06 139.94 L381.36 143.34 L382.65 146.56 L383.95 149.59 L385.25 152.44 L386.54 155.11 L387.84 157.60 L389.13 159.90 L390.43 162.03 L391.73 163.97 L393.02 165.72 L394.32 167.30 L395.61 168.69 L396.91 169.91 L398.20 170.93 L399.50 171.78 L400.80 172.45 L402.09 172.93 L403.39 173.23 L404.68 173.35 L405.98 173.28 L407.27 173.03 L408.57 172.60 L409.87 171.99 L411.16 171.20 L412.46 170.22 L413.75 169.06 L415.05 167.72 L416.35 166.20 L417.64 164.49 L418.94 162.61 L420.23 160.54 L421.53 158.29 L422.83 155.85 L424.12 153.23 L425.42 150.43 L426.71 147.45 L428.01 144.29 L429.30 140.94 L430.60 137.42" fill="none" stroke="#2ac02a" stroke-width="0.65" opacity="1"/>
<path d="M368.40 137.15 V101.15" fill="none" stroke="#1aa81a" stroke-width="0.5" opacity="1"/>
<path d="M373.58 140.09 V120.21" fill="none" stroke="#1aa81a" stroke-width="0.5" opacity="1"/>
<path d="M378.77 143.03 V136.36" fill="none" stroke="#1aa81a" stroke-width="0.5" opacity="1"/>
<path d="M383.95 145.96 V149.59" fill="none" stroke="#1aa81a" stroke-width="0.5" opacity="1"/>
<path d="M389.13 148.90 V159.90" fill="none" stroke="#1aa81a" stroke-width="0.5" opacity="1"/>
<path d="M394.32 151.84 V167.30" fill="none" stroke="#1aa81a" stroke-width="0.5" opacity="1"/>
<path d="M399.50 154.78 V171.78" fill="none" stroke="#1aa81a" stroke-width="0.5" opacity="1"/>
<path d="M404.68 157.72 V173.35" fill="none" stroke="#1aa81a" stroke-width="0.5" opacity="1"/>
<path d="M409.87 160.66 V171.99" fill="none" stroke="#1aa81a" stroke-width="0.5" opacity="1"/>
<path d="M415.05 163.60 V167.72" fill="none" stroke="#1aa81a" stroke-width="0.5" opacity="1"/>
<path d="M420.23 166.54 V160.54" fill="none" stroke="#1aa81a" stroke-width="0.5" opacity="1"/>
<path d="M425.42 169.48 V150.43" fill="none" stroke="#1aa81a" stroke-width="0.5" opacity="1"/>
<path d="M430.60 172.42 V137.42" fill="none" stroke="#1aa81a" stroke-width="0.5" opacity="1"/>
<path d="M430.60 137.42 L431.89 142.35 L433.17 147.11 L434.46 151.70 L435.74 156.11 L437.03 160.35 L438.31 164.41 L439.60 168.31 L440.88 172.02 L442.17 175.57 L443.45 178.94 L444.74 182.14 L446.03 185.16 L447.31 188.01 L448.60 190.69 L449.88 193.19 L451.17 195.52 L452.45 197.68 L453.74 199.66 L455.02 201.47 L456.31 203.10 L457.59 204.56 L458.88 205.85 L460.16 206.97 L461.45 207.91 L462.74 208.67 L464.02 209.27 L465.31 209.69 L466.59 209.93 L467.88 210.01 L469.16 209.91 L470.45 209.63 L471.73 209.18 L473.02 208.56 L474.30 207.76 L475.59 206.80 L476.88 205.65 L478.16 204.34 L479.45 202.85 L480.73 201.18 L482.02 199.35 L483.30 197.34 L484.59 195.15 L485.87 192.79 L487.16 190.26 L488.44 187.56 L489.73 184.68 L491.01 181.63 L492.30 178.40" fill="none" stroke="#2ac02a" stroke-width="0.65" opacity="1"/>
<path d="M430.60 172.42 V137.42" fill="none" stroke="#1aa81a" stroke-width="0.5" opacity="1"/>
<path d="M435.74 175.33 V156.11" fill="none" stroke="#1aa81a" stroke-width="0.5" opacity="1"/>
<path d="M440.88 178.25 V172.02" fill="none" stroke="#1aa81a" stroke-width="0.5" opacity="1"/>
<path d="M446.03 181.16 V185.16" fill="none" stroke="#1aa81a" stroke-width="0.5" opacity="1"/>
<path d="M451.17 184.08 V195.52" fill="none" stroke="#1aa81a" stroke-width="0.5" opacity="1"/>
<path d="M456.31 186.99 V203.10" fill="none" stroke="#1aa81a" stroke-width="0.5" opacity="1"/>
<path d="M461.45 189.91 V207.91" fill="none" stroke="#1aa81a" stroke-width="0.5" opacity="1"/>
<path d="M466.59 192.82 V209.93" fill="none" stroke="#1aa81a" stroke-width="0.5" opacity="1"/>
<path d="M471.73 195.74 V209.18" fill="none" stroke="#1aa81a" stroke-width="0.5" opacity="1"/>
<path d="M476.88 198.65 V205.65" fill="none" stroke="#1aa81a" stroke-width="0.5" opacity="1"/>
<path d="M482.02 201.57 V199.35" fill="none" stroke="#1aa81a" stroke-width="0.5" opacity="1"/>
<path d="M487.16 204.48 V190.26" fill="none" stroke="#1aa81a" stroke-width="0.5" opacity="1"/>
<path d="M492.30 207.40 V178.40" fill="none" stroke="#1aa81a" stroke-width="0.5" opacity="1"/>
<path d="M462.30 192.39 V207.93" stroke="#3cff3c" stroke-width="1.2"/>
<path d="M306.3 100.5 L279.80 85.47 L306.3 122" fill="none" stroke="#2ab82a" stroke-width="0.6" opacity="1"/>
<path d="M306.3 103.70 L283.74 90.91" fill="none" stroke="#1aa01a" stroke-width="0.45" opacity="1"/>
<path d="M306.3 106.90 L287.69 96.35" fill="none" stroke="#1aa01a" stroke-width="0.45" opacity="1"/>
<path d="M306.3 110.10 L291.63 101.78" fill="none" stroke="#1aa01a" stroke-width="0.45" opacity="1"/>
<path d="M306.3 113.30 L295.58 107.22" fill="none" stroke="#1aa01a" stroke-width="0.45" opacity="1"/>
<path d="M306.3 116.50 L299.52 112.66" fill="none" stroke="#1aa01a" stroke-width="0.45" opacity="1"/>
<path d="M306.3 119.70 L303.47 118.09" fill="none" stroke="#1aa01a" stroke-width="0.45" opacity="1"/>
<path d="M306.3 152.0 L294.80 145.48 L306.3 168" fill="none" stroke="#2ab82a" stroke-width="0.6" opacity="1"/>
<path d="M306.3 155.20 L297.10 149.98" fill="none" stroke="#1aa01a" stroke-width="0.45" opacity="1"/>
<path d="M306.3 158.40 L299.40 154.49" fill="none" stroke="#1aa01a" stroke-width="0.45" opacity="1"/>
<path d="M306.3 161.60 L301.70 158.99" fill="none" stroke="#1aa01a" stroke-width="0.45" opacity="1"/>
<path d="M306.3 164.80 L304.00 163.50" fill="none" stroke="#1aa01a" stroke-width="0.45" opacity="1"/>
<path d="M492.3 207.0 L519.30 222.31 L492.3 238" fill="none" stroke="#2ab82a" stroke-width="0.6" opacity="1"/>
<path d="M492.3 210.20 L516.51 223.93" fill="none" stroke="#1aa01a" stroke-width="0.45" opacity="1"/>
<path d="M492.3 213.40 L513.73 225.55" fill="none" stroke="#1aa01a" stroke-width="0.45" opacity="1"/>
<path d="M492.3 216.60 L510.94 227.17" fill="none" stroke="#1aa01a" stroke-width="0.45" opacity="1"/>
<path d="M492.3 219.80 L508.15 228.79" fill="none" stroke="#1aa01a" stroke-width="0.45" opacity="1"/>
<path d="M492.3 223.00 L505.36 230.41" fill="none" stroke="#1aa01a" stroke-width="0.45" opacity="1"/>
<path d="M492.3 226.20 L502.58 232.03" fill="none" stroke="#1aa01a" stroke-width="0.45" opacity="1"/>
<path d="M492.3 229.40 L499.79 233.65" fill="none" stroke="#1aa01a" stroke-width="0.45" opacity="1"/>
<path d="M492.3 232.60 L497.00 235.27" fill="none" stroke="#1aa01a" stroke-width="0.45" opacity="1"/>
<path d="M492.3 235.80 L494.22 236.89" fill="none" stroke="#1aa01a" stroke-width="0.45" opacity="1"/>
<path d="M492.3 261.0 L504.80 268.09 L492.3 287" fill="none" stroke="#2ab82a" stroke-width="0.6" opacity="1"/>
<path d="M492.3 264.20 L503.26 270.42" fill="none" stroke="#1aa01a" stroke-width="0.45" opacity="1"/>
<path d="M492.3 267.40 L501.72 272.74" fill="none" stroke="#1aa01a" stroke-width="0.45" opacity="1"/>
<path d="M492.3 270.60 L500.18 275.07" fill="none" stroke="#1aa01a" stroke-width="0.45" opacity="1"/>
<path d="M492.3 273.80 L498.65 277.40" fill="none" stroke="#1aa01a" stroke-width="0.45" opacity="1"/>
<path d="M492.3 277.00 L497.11 279.73" fill="none" stroke="#1aa01a" stroke-width="0.45" opacity="1"/>
<path d="M492.3 280.20 L495.57 282.05" fill="none" stroke="#1aa01a" stroke-width="0.45" opacity="1"/>
<path d="M492.3 283.40 L494.03 284.38" fill="none" stroke="#1aa01a" stroke-width="0.45" opacity="1"/>
<polygon points="303.00,159.50 303.00,153.20 312.40,151.49 491.50,253.04 491.50,260.54 486.50,263.54" fill="#ff0000"/>
<line x1="312.4" y1="154.29" x2="486.5" y2="253.01" stroke="#ff6a6a" stroke-width="0.45"/>
<line x1="312.4" y1="159.09" x2="486.5" y2="257.81" stroke="#ff5a5a" stroke-width="0.4"/>
<path d="M486.5 263.54 V256.04 L491.5 253.04" fill="none" stroke="#ff8080" stroke-width="0.45"/>
<path d="M300.2 98.3 L301.7 96.8 H312.4 V206.5 L310.9 207.7 H300.2Z" fill="#0000ff"/>
<line x1="300.59999999999997" y1="98.3" x2="300.59999999999997" y2="207.5" stroke="#4040ff" stroke-width="0.5"/>
<line x1="307.4" y1="97.3" x2="307.4" y2="207.5" stroke="#9090ff" stroke-width="0.55"/>
<line x1="312.0" y1="97.3" x2="312.0" y2="206.5" stroke="#5050ff" stroke-width="0.5"/>
<path d="M305.7 210.0 L307.0 208.0 L308.4 210.0" fill="none" stroke="#b0b0b0" stroke-width="0.5"/>
<path d="M362.2 135 L363.7 133.5 H374.5 V244 L373.0 245.2 H362.2Z" fill="#0000ff"/>
<line x1="362.59999999999997" y1="135" x2="362.59999999999997" y2="245" stroke="#4040ff" stroke-width="0.5"/>
<line x1="369.4" y1="134" x2="369.4" y2="245" stroke="#9090ff" stroke-width="0.55"/>
<line x1="374.1" y1="134" x2="374.1" y2="244" stroke="#5050ff" stroke-width="0.5"/>
<path d="M367.7 247.5 L369.0 245.5 L370.4 247.5" fill="none" stroke="#b0b0b0" stroke-width="0.5"/>
<path d="M424 171 L425.5 169.5 H437 V281.5 L435.5 282.7 H424Z" fill="#0000ff"/>
<line x1="424.4" y1="171" x2="424.4" y2="282.5" stroke="#4040ff" stroke-width="0.5"/>
<line x1="431.2" y1="170" x2="431.2" y2="282.5" stroke="#9090ff" stroke-width="0.55"/>
<line x1="436.6" y1="170" x2="436.6" y2="281.5" stroke="#5050ff" stroke-width="0.5"/>
<path d="M429.5 285.0 L430.8 283.0 L432.2 285.0" fill="none" stroke="#b0b0b0" stroke-width="0.5"/>
<path d="M486 208.3 L487.5 206.8 H498.7 V318 L497.2 319.2 H486Z" fill="#0000ff"/>
<line x1="486.4" y1="208.3" x2="486.4" y2="319" stroke="#4040ff" stroke-width="0.5"/>
<line x1="493.2" y1="207.3" x2="493.2" y2="319" stroke="#9090ff" stroke-width="0.55"/>
<line x1="498.3" y1="207.3" x2="498.3" y2="318" stroke="#5050ff" stroke-width="0.5"/>
<path d="M491.5 321.5 L492.8 319.5 L494.2 321.5" fill="none" stroke="#b0b0b0" stroke-width="0.5"/>
<polygon points="362.2,186.27 374.5,193.24 374.5,200.04 362.2,193.07" fill="#ff0000"/>
<line x1="362.2" y1="188.47" x2="374.5" y2="195.44" stroke="#ff6a6a" stroke-width="0.4"/>
<polygon points="424,221.31 437,228.68 437,235.48 424,228.11" fill="#ff0000"/>
<line x1="424" y1="223.51" x2="437" y2="230.88" stroke="#ff6a6a" stroke-width="0.4"/>
<polygon points="486,255.74 486.5,256.04 490.5,253.84 490.5,261.34 486.5,263.54 486,263.24" fill="#ff0000"/>
<path d="M486.5 263.54 V256.04" stroke="#ff8080" stroke-width="0.45"/>
<polygon points="303,159.5 303,153.2 312.4,151.5 312.4,164.83" fill="#ff0000"/>
<path d="M303 159.5 V153.2 L312.4 151.5" fill="none" stroke="#ff8080" stroke-width="0.45"/>
<path d="M306.30 155.74 V148.74" fill="none" stroke="#e0a020" stroke-width="0.5" opacity="0.55"/>
<path d="M311.48 158.67 V151.67" fill="none" stroke="#e0a020" stroke-width="0.5" opacity="0.55"/>
<path d="M316.65 161.61 V157.44" fill="none" stroke="#e0a020" stroke-width="0.5" opacity="0.55"/>
<path d="M358.05 185.08 V180.91" fill="none" stroke="#e0a020" stroke-width="0.5" opacity="0.55"/>
<path d="M363.22 188.01 V181.01" fill="none" stroke="#e0a020" stroke-width="0.5" opacity="0.55"/>
<path d="M368.40 190.95 V183.95" fill="none" stroke="#e0a020" stroke-width="0.5" opacity="0.55"/>
<path d="M315.36 154.04 L316.65 157.44 L317.94 160.68" fill="none" stroke="#e0a020" stroke-width="0.55" opacity="0.6"/>
<path d="M356.76 182.68 L358.05 180.91 L359.34 178.98" fill="none" stroke="#e0a020" stroke-width="0.55" opacity="0.6"/>
<path d="M368.40 190.95 V183.95" fill="none" stroke="#e0a020" stroke-width="0.5" opacity="0.55"/>
<path d="M373.58 193.89 V186.89" fill="none" stroke="#e0a020" stroke-width="0.5" opacity="0.55"/>
<path d="M378.77 196.83 V192.66" fill="none" stroke="#e0a020" stroke-width="0.5" opacity="0.55"/>
<path d="M420.23 220.34 V216.17" fill="none" stroke="#e0a020" stroke-width="0.5" opacity="0.55"/>
<path d="M425.42 223.28 V216.28" fill="none" stroke="#e0a020" stroke-width="0.5" opacity="0.55"/>
<path d="M430.60 226.22 V219.22" fill="none" stroke="#e0a020" stroke-width="0.5" opacity="0.55"/>
<path d="M377.47 189.26 L378.77 192.66 L380.06 195.90" fill="none" stroke="#e0a020" stroke-width="0.55" opacity="0.6"/>
<path d="M418.94 217.94 L420.23 216.17 L421.53 214.24" fill="none" stroke="#e0a020" stroke-width="0.55" opacity="0.6"/>
<path d="M430.60 226.22 V219.22" fill="none" stroke="#e0a020" stroke-width="0.5" opacity="0.55"/>
<path d="M435.74 229.13 V222.13" fill="none" stroke="#e0a020" stroke-width="0.5" opacity="0.55"/>
<path d="M440.88 232.05 V227.43" fill="none" stroke="#e0a020" stroke-width="0.5" opacity="0.55"/>
<path d="M482.02 255.37 V253.42" fill="none" stroke="#e0a020" stroke-width="0.5" opacity="0.55"/>
<path d="M487.16 258.28 V251.28" fill="none" stroke="#e0a020" stroke-width="0.5" opacity="0.55"/>
<path d="M492.30 261.20 V254.20" fill="none" stroke="#e0a020" stroke-width="0.5" opacity="0.55"/>
<path d="M439.60 224.07 L440.88 227.43 L442.17 230.64" fill="none" stroke="#e0a020" stroke-width="0.55" opacity="0.6"/>
<path d="M482.02 253.42 L483.30 251.69 L484.59 249.79" fill="none" stroke="#e0a020" stroke-width="0.55" opacity="0.6"/>
<polygon points="303.40,106.00 303.40,97.80 308.40,94.80 494.00,200.04 494.00,208.24 489.00,211.24" fill="#ff0000"/>
<line x1="303.4" y1="94.77" x2="489.0" y2="200.00" stroke="#ff6a6a" stroke-width="0.45"/>
<line x1="303.4" y1="99.56" x2="489.0" y2="204.80" stroke="#ff5a5a" stroke-width="0.4"/>
<path d="M489.0 211.24 V203.04 L494.0 200.04" fill="none" stroke="#ff8080" stroke-width="0.45"/>
<path d="M306.30 101.94 V94.94" fill="none" stroke="#e0a020" stroke-width="0.5" opacity="0.55"/>
<path d="M311.48 104.87 V97.87" fill="none" stroke="#e0a020" stroke-width="0.5" opacity="0.55"/>
<path d="M316.65 107.81 V104.31" fill="none" stroke="#e0a020" stroke-width="0.5" opacity="0.55"/>
<path d="M358.05 131.28 V124.28" fill="none" stroke="#e0a020" stroke-width="0.5" opacity="0.55"/>
<path d="M363.22 134.21 V127.21" fill="none" stroke="#e0a020" stroke-width="0.5" opacity="0.55"/>
<path d="M368.40 137.15 V130.15" fill="none" stroke="#e0a020" stroke-width="0.5" opacity="0.55"/>
<path d="M315.36 100.86 L316.65 104.31 L317.94 107.58" fill="none" stroke="#e0a020" stroke-width="0.55" opacity="0.6"/>
<path d="M355.46 127.72 L356.76 125.83" fill="none" stroke="#e0a020" stroke-width="0.55" opacity="0.6"/>
<path d="M368.40 137.15 V130.15" fill="none" stroke="#e0a020" stroke-width="0.5" opacity="0.55"/>
<path d="M373.58 140.09 V133.09" fill="none" stroke="#e0a020" stroke-width="0.5" opacity="0.55"/>
<path d="M378.77 143.03 V136.36" fill="none" stroke="#e0a020" stroke-width="0.5" opacity="0.55"/>
<path d="M420.23 166.54 V160.54" fill="none" stroke="#e0a020" stroke-width="0.5" opacity="0.55"/>
<path d="M425.42 169.48 V162.48" fill="none" stroke="#e0a020" stroke-width="0.5" opacity="0.55"/>
<path d="M430.60 172.42 V165.42" fill="none" stroke="#e0a020" stroke-width="0.5" opacity="0.55"/>
<path d="M378.77 136.36 L380.06 139.94 L381.36 143.34" fill="none" stroke="#e0a020" stroke-width="0.55" opacity="0.6"/>
<path d="M417.64 164.49 L418.94 162.61 L420.23 160.54" fill="none" stroke="#e0a020" stroke-width="0.55" opacity="0.6"/>
<path d="M430.60 172.42 V165.42" fill="none" stroke="#e0a020" stroke-width="0.5" opacity="0.55"/>
<path d="M435.74 175.33 V168.33" fill="none" stroke="#e0a020" stroke-width="0.5" opacity="0.55"/>
<path d="M440.88 178.25 V172.02" fill="none" stroke="#e0a020" stroke-width="0.5" opacity="0.55"/>
<path d="M482.02 201.57 V199.35" fill="none" stroke="#e0a020" stroke-width="0.5" opacity="0.55"/>
<path d="M487.16 204.48 V197.48" fill="none" stroke="#e0a020" stroke-width="0.5" opacity="0.55"/>
<path d="M492.30 207.40 V200.40" fill="none" stroke="#e0a020" stroke-width="0.5" opacity="0.55"/>
<path d="M440.88 172.02 L442.17 175.57 L443.45 178.94" fill="none" stroke="#e0a020" stroke-width="0.55" opacity="0.6"/>
<path d="M482.02 199.35 L483.30 197.34" fill="none" stroke="#e0a020" stroke-width="0.55" opacity="0.6"/>
<path d="M373.0 142 L372.0 174" stroke="#60a0ff" stroke-width="0.6" stroke-dasharray="1 1.5"/>
<path d="M372.0 196 L373.0 229" stroke="#60a0ff" stroke-width="0.6" stroke-dasharray="1 1.5"/>
<path d="M435.5 178 L434.5 210" stroke="#60a0ff" stroke-width="0.6" stroke-dasharray="1 1.5"/>
<path d="M434.5 232 L435.5 265" stroke="#60a0ff" stroke-width="0.6" stroke-dasharray="1 1.5"/>
<path d="M98.6 320.5 V296.2 H96.5 L102.8 292.6 L109.7 302.8 H107.8 V325.6" fill="none" stroke="#c4c4c4" stroke-width="0.75"/>
<path d="M98.6 312 L119.3 323.4 L118.3 320.6 L125.8 331.7 L119.6 335 L119.8 332.4 L98.6 320.5" fill="none" stroke="#c4c4c4" stroke-width="0.75"/>
<path d="M100.8 297.8 L102.2 299.8 L103.8 297.5 M102.2 299.8 V301.2" fill="none" stroke="#c4c4c4" stroke-width="0.55"/>
<path d="M117.8 325.2 L120.8 328.8 M120.8 325.2 L117.8 328.8" stroke="#c4c4c4" stroke-width="0.55"/><rect x="788" y="53.5" width="1" height="1" fill="#bbb"/>
<rect x="790" y="53.5" width="1" height="1" fill="#bbb"/>
<rect x="792" y="53.5" width="1" height="1" fill="#bbb"/>
<rect x="794" y="53.5" width="1" height="1" fill="#bbb"/>
<rect x="796" y="53.5" width="1" height="1" fill="#bbb"/>
<rect x="787.5" y="56.5" width="11" height="10.5" fill="#e4eef8" stroke="#9fcbef" stroke-width="1"/>
<circle cx="793" cy="61.5" r="1.1" fill="#a08a10"/>
<rect x="787.5" y="67.5" width="11" height="11" fill="#e4eef8" stroke="#9fcbef" stroke-width="1"/>
<line x1="789.5" y1="76.5" x2="796.5" y2="69.5" stroke="#1a5a6a" stroke-width="1.1"/>
<line x1="788" y1="81.5" x2="798" y2="81.5" stroke="#dadae2" stroke-width="0.6"/>
<line x1="790" y1="92" x2="796" y2="86" stroke="#d03040" stroke-width="0.9"/><line x1="790" y1="92" x2="792" y2="90" stroke="#3040c0" stroke-width="0.9"/>
<path d="M790.5 97.5 H795.5 M793 97.5 V103.5 M790.5 103.5 H795.5" stroke="#333" stroke-width="1.2"/>
<rect x="787.5" y="106" width="11" height="11.5" fill="#e4eef8" stroke="#9fcbef" stroke-width="1"/>
<path d="M789.5 114.5 L795 109 Q797 108 796.5 110.5 L791 115.5 Q789 116.5 789.5 114.5Z" fill="#1a2a9a"/>
<path d="M790 125 V129 M790 125 L792 129 V125" fill="none" stroke="#222" stroke-width="0.6"/><path d="M792 130.5 L795 127.5" stroke="#d03040" stroke-width="0.9"/>
<path d="M790 141.5 H797 M792 141 L793.5 137.5 L795 141" fill="none" stroke="#222" stroke-width="0.7"/><line x1="789" y1="142.5" x2="797" y2="142.5" stroke="#d03040" stroke-width="0.8"/>
<path d="M792 153 V148 H794 Q795 148 795 149.5 Q795 151 794 151 H792" fill="none" stroke="#222" stroke-width="0.8"/><line x1="789" y1="154" x2="797" y2="154" stroke="#d03040" stroke-width="0.8"/>
<line x1="788" y1="159.5" x2="798" y2="159.5" stroke="#dadae2" stroke-width="0.6"/>
<line x1="790" y1="171" x2="796.5" y2="164" stroke="#2a4ad0" stroke-width="0.9"/><path d="M790 166 L794 168 L797 167" fill="none" stroke="#d03040" stroke-width="0.7"/>
<rect x="787.5" y="174.5" width="11" height="10.5" fill="#e4eef8" stroke="#9fcbef" stroke-width="1"/>
<path d="M789.5 177.5 H793 L795 181 H797 M789.5 182.5 H797" fill="none" stroke="#c02020" stroke-width="0.9"/>
<rect x="789.5" y="189" width="5" height="2" fill="#222"/><path d="M794.5 188.5 L797 190 L794.5 191.5Z" fill="#d03040"/>
<path d="M789.5 204.5 L793 201.5 L797 204.5" fill="none" stroke="#d03040" stroke-width="0.8"/><line x1="789" y1="204.5" x2="797" y2="204.5" stroke="#999" stroke-width="0.6"/>
<line x1="788" y1="209.5" x2="798" y2="209.5" stroke="#dadae2" stroke-width="0.6"/>
<path d="M790 213.5 H793 M790 215.5 H796 M790 217.5 H796" stroke="#777" stroke-width="0.6"/><rect x="793" y="216.5" width="3.5" height="3" fill="none" stroke="#888" stroke-width="0.5"/>
<path d="M789.8 222 L790.8 223 L791.8 222" fill="none" stroke="#444" stroke-width="0.5"/><rect x="0" y="340" width="800" height="2.7" fill="#e4e4ea"/>
<rect x="79" y="339.5" width="707.6" height="3.2" fill="#d0d8e6"/>
<line x1="23" y1="348.5" x2="757" y2="348.5" stroke="#c8c8d0" stroke-width="0.8" stroke-dasharray="1 1"/>
<line x1="24" y1="349.5" x2="757" y2="349.5" stroke="#d2d2d8" stroke-width="0.8" stroke-dasharray="1 3"/>
<path d="M760.5 347.8 H764 L762.3 349.8Z" fill="#444"/>
<path d="M770.8 346.5 H772.6 V348.6 H773.2 V349.2 H770.2 V348.6 H770.8Z M771.7 349.2 V351" fill="#777" stroke="#777" stroke-width="0.3"/>
<path d="M779.8 346.8 L783 350 M783 346.8 L779.8 350" stroke="#444" stroke-width="0.8"/>
<rect x="1" y="355.5" width="785" height="39.5" fill="#ffffff"/>
<line x1="1" y1="395.5" x2="786" y2="395.5" stroke="#9a9aa2" stroke-width="1"/>
<line x1="786" y1="355.5" x2="786" y2="395.5" stroke="#c8c8d0" stroke-width="0.6"/>
<path d="M779.3 361.5 L781 359.8 L782.7 361.5" fill="none" stroke="#555" stroke-width="0.7"/>
<rect x="778.3" y="365" width="5.5" height="8.5" fill="#cdcdd2"/>
<path d="M779.3 390.5 L781 392.2 L782.7 390.5" fill="none" stroke="#555" stroke-width="0.7"/>
<rect x="1" y="355.5" width="450.7" height="9.8" fill="#f0f0f2"/>
<rect x="1" y="365.3" width="18.5" height="9.3" fill="#f0f0f2"/>
<rect x="1" y="374.6" width="18.5" height="9.3" fill="#f0f0f2"/>
<rect x="1" y="383.9" width="18.5" height="9.3" fill="#f0f0f2"/>
<line x1="1" y1="355.5" x2="1" y2="395" stroke="#dadade" stroke-width="0.7"/>
<line x1="19.5" y1="355.5" x2="19.5" y2="395" stroke="#dadade" stroke-width="0.7"/>
<line x1="35.2" y1="355.5" x2="35.2" y2="395" stroke="#dadade" stroke-width="0.7"/>
<line x1="66.8" y1="355.5" x2="66.8" y2="395" stroke="#dadade" stroke-width="0.7"/>
<line x1="80.2" y1="355.5" x2="80.2" y2="395" stroke="#dadade" stroke-width="0.7"/>
<line x1="105.7" y1="355.5" x2="105.7" y2="395" stroke="#dadade" stroke-width="0.7"/>
<line x1="126.7" y1="355.5" x2="126.7" y2="395" stroke="#dadade" stroke-width="0.7"/>
<line x1="160.7" y1="355.5" x2="160.7" y2="395" stroke="#dadade" stroke-width="0.7"/>
<line x1="180.5" y1="355.5" x2="180.5" y2="395" stroke="#dadade" stroke-width="0.7"/>
<line x1="203.4" y1="355.5" x2="203.4" y2="395" stroke="#dadade" stroke-width="0.7"/>
<line x1="238.5" y1="355.5" x2="238.5" y2="395" stroke="#dadade" stroke-width="0.7"/>
<line x1="249.7" y1="355.5" x2="249.7" y2="395" stroke="#dadade" stroke-width="0.7"/>
<line x1="276" y1="355.5" x2="276" y2="395" stroke="#dadade" stroke-width="0.7"/>
<line x1="302" y1="355.5" x2="302" y2="395" stroke="#dadade" stroke-width="0.7"/>
<line x1="318.7" y1="355.5" x2="318.7" y2="395" stroke="#dadade" stroke-width="0.7"/>
<line x1="336.6" y1="355.5" x2="336.6" y2="395" stroke="#dadade" stroke-width="0.7"/>
<line x1="353.3" y1="355.5" x2="353.3" y2="395" stroke="#dadade" stroke-width="0.7"/>
<line x1="451.7" y1="355.5" x2="451.7" y2="395" stroke="#dadade" stroke-width="0.7"/>
<line x1="1" y1="355.5" x2="451.7" y2="355.5" stroke="#e0e0e4" stroke-width="0.7"/>
<line x1="1" y1="365.3" x2="451.7" y2="365.3" stroke="#e0e0e4" stroke-width="0.7"/>
<line x1="1" y1="374.6" x2="451.7" y2="374.6" stroke="#e0e0e4" stroke-width="0.7"/>
<line x1="1" y1="383.9" x2="451.7" y2="383.9" stroke="#e0e0e4" stroke-width="0.7"/>
<line x1="1" y1="393.2" x2="451.7" y2="393.2" stroke="#e0e0e4" stroke-width="0.7"/>
<rect x="20.2" y="366" width="14.5" height="8.3" fill="none" stroke="#222" stroke-width="1.2"/><rect x="34" y="373.6" width="1.6" height="1.6" fill="#222"/>
<path d="M3 398.5 V402.5 M4 400.5 L6 398.5 V402.5Z" fill="#777" stroke="#777" stroke-width="0.5"/>
<path d="M13 398.5 L10.5 400.5 L13 402.5Z" fill="#777"/>
<path d="M18 398.5 L20.5 400.5 L18 402.5Z" fill="#777"/>
<path d="M25 398.5 L27.5 400.5 L25 402.5Z M28 398.5 V402.5" fill="#777" stroke="#777" stroke-width="0.5"/>
<path d="M32 395.6 L36 403.5 H84 L88 395.6" fill="#fff" stroke="#444" stroke-width="0.7"/>
<rect x="400.5" y="397" width="0.8" height="1" fill="#888"/>
<rect x="400.5" y="399" width="0.8" height="1" fill="#888"/>
<rect x="400.5" y="401" width="0.8" height="1" fill="#888"/>
<rect x="400.5" y="403" width="0.8" height="1" fill="#888"/>
<path d="M408.5 398.5 L406.3 400.2 L408.5 402Z" fill="#333"/>
<rect x="411" y="398.3" width="9.5" height="4" fill="#c8c8d8"/>
<path d="M772.5 398 L774.8 400 L772.5 402Z" fill="#444"/>
<rect x="1.8" y="408" width="1" height="1" fill="#bbb"/>
<rect x="1.8" y="410" width="1" height="1" fill="#bbb"/>
<rect x="1.8" y="412" width="1" height="1" fill="#bbb"/>
<rect x="1.8" y="414" width="1" height="1" fill="#bbb"/>
<rect x="1.8" y="416" width="1" height="1" fill="#bbb"/>
<rect x="6" y="408" width="5" height="6" fill="#ddd" stroke="#999" stroke-width="0.5"/><circle cx="9" cy="411.5" r="2" fill="none" stroke="#777" stroke-width="0.7"/><line x1="10.5" y1="413" x2="13.5" y2="415.5" stroke="#555" stroke-width="0.8"/>
<line x1="18.5" y1="406" x2="18.5" y2="418" stroke="#dcdce2" stroke-width="0.7"/>
<path d="M22 413.5 H29 M24 413.5 V409" stroke="#bbb" stroke-width="0.6"/><path d="M25 408 L27 410 M27 408 L25 410" stroke="#bbb" stroke-width="0.5"/>
<rect x="31.5" y="406.5" width="11" height="11" fill="none" stroke="#d0d0d8" stroke-width="0.6"/><path d="M33.5 413.5 H41 M36 413.5 V409" stroke="#bbb" stroke-width="0.6"/><path d="M37 408 L39 410 M39 408 L37 410" stroke="#bbb" stroke-width="0.5"/>
<line x1="45.5" y1="406" x2="45.5" y2="418" stroke="#dcdce2" stroke-width="0.7"/>
<line x1="113.5" y1="406" x2="113.5" y2="418" stroke="#dcdce2" stroke-width="0.7"/>
<rect x="114.5" y="406.5" width="11" height="11" fill="none" stroke="#c8c8d0" stroke-width="0.6"/>
<line x1="139.5" y1="406" x2="139.5" y2="418" stroke="#dcdce2" stroke-width="0.7"/>
<rect x="214" y="414" width="1.5" height="1" fill="#555"/></svg><div class="t" style="left:12.40px;top:2.96px;font-size:6.54px;color:#5a5a5a;transform:scaleX(0.898);">Ludi3 - 1.12.0.3 - esempio1 - [Modello]</div>
<div class="t" style="left:18.00px;top:15.79px;font-size:6.40px;color:#555;transform:scaleX(0.748);">FILE</div>
<div class="t" style="left:37.00px;top:15.79px;font-size:6.40px;color:#555;transform:scaleX(0.886);">MODIFICA</div>
<div class="t" style="left:72.80px;top:15.79px;font-size:6.40px;color:#555;transform:scaleX(0.852);">VISUALIZZA</div>
<div class="t" style="left:113.00px;top:15.79px;font-size:6.40px;color:#555;transform:scaleX(0.851);">MODELLO</div>
<div class="t" style="left:148.30px;top:15.79px;font-size:6.40px;color:#555;transform:scaleX(0.771);">CREA</div>
<div class="t" style="left:170.50px;top:15.79px;font-size:6.40px;color:#555;transform:scaleX(0.798);">ATTRIBUTI</div>
<div class="t" style="left:205.50px;top:15.79px;font-size:6.40px;color:#555;transform:scaleX(0.818);">STRUMENTI</div>
<div class="t" style="left:244.50px;top:15.79px;font-size:6.40px;color:#555;transform:scaleX(0.782);">PROPRIETA'</div>
<div class="t" style="left:283.00px;top:15.79px;font-size:6.40px;color:#555;transform:scaleX(0.837);">CALCOLA</div>
<div class="t" style="left:317.00px;top:15.79px;font-size:6.40px;color:#555;transform:scaleX(0.800);">RISULTATI</div>
<div class="t" style="left:351.60px;top:15.79px;font-size:6.40px;color:#555;transform:scaleX(0.762);">FINESTRA</div>
<div class="t" style="left:384.50px;top:15.79px;font-size:6.40px;color:#555;transform:scaleX(0.844);">?</div>
<div class="t" style="left:7.00px;top:42.43px;font-size:6.10px;color:#444;transform:scaleX(0.914);">NTC18 - C.A.</div>
<div class="t" style="left:113.30px;top:41.66px;font-size:6.54px;color:#5858d0;transform:scaleX(0.802);">SLU</div>
<div class="t" style="left:1.80px;top:55.19px;font-size:6.40px;color:#333;transform:scaleX(0.872);">Spazio di lavoro</div>
<div class="r" style="left:1px;top:63px;width:76px;height:276.5px;background:#f7f7f9;z-index:0;box-sizing:border-box;border-left:1px solid #e4e4ea;border-right:1px solid #e2e2e8;border-bottom:1px solid #e0e0e6;"></div>
<div class="r" style="left:24.5px;top:329px;width:52px;height:10px;background:#ededf1;z-index:0;box-sizing:border-box;border-top:1px solid #d8d8de;border-left:1px solid #e0e0e6;border-right:1px solid #e0e0e6;"></div>
<div class="t" style="left:19.50px;top:67.09px;font-size:6.40px;color:#2a2a2a;transform:scaleX(0.950);">Modello</div>
<div class="t" style="left:26.50px;top:76.59px;font-size:6.40px;color:#2a2a2a;transform:scaleX(0.950);">Calcestruzzo</div>
<div class="t" style="left:35.00px;top:85.59px;font-size:6.40px;color:#2a2a2a;transform:scaleX(0.950);">Travata 1</div>
<div class="t" style="left:43.00px;top:94.59px;font-size:6.40px;color:#2a2a2a;transform:scaleX(0.950);">Trave 5</div>
<div class="t" style="left:43.00px;top:103.59px;font-size:6.40px;color:#2a2a2a;transform:scaleX(0.950);">Trave 6</div>
<div class="t" style="left:43.00px;top:113.09px;font-size:6.40px;color:#2a2a2a;transform:scaleX(0.950);">Trave 7</div>
<div class="t" style="left:35.00px;top:122.09px;font-size:6.40px;color:#2a2a2a;transform:scaleX(0.950);">Travata 2</div>
<div class="t" style="left:43.00px;top:131.09px;font-size:6.40px;color:#2a2a2a;transform:scaleX(0.950);">Trave 12</div>
<div class="t" style="left:43.00px;top:140.59px;font-size:6.40px;color:#2a2a2a;transform:scaleX(0.950);">Trave 13</div>
<div class="t" style="left:43.00px;top:149.59px;font-size:6.40px;color:#2a2a2a;transform:scaleX(0.950);">Trave 14</div>
<div class="t" style="left:34.50px;top:158.59px;font-size:6.40px;color:#2a2a2a;transform:scaleX(0.950);">Pilastrate</div>
<div class="t" style="left:42.00px;top:168.09px;font-size:6.40px;color:#2a2a2a;transform:scaleX(0.950);">Pilastrata 1</div>
<div class="t" style="left:42.00px;top:177.09px;font-size:6.40px;color:#2a2a2a;transform:scaleX(0.950);">Pilastrata 2</div>
<div class="t" style="left:42.00px;top:186.09px;font-size:6.40px;color:#2a2a2a;transform:scaleX(0.950);">Pilastrata 3</div>
<div class="t" style="left:42.00px;top:195.59px;font-size:6.40px;color:#2a2a2a;transform:scaleX(0.950);">Pilastrata 4</div>
<div class="t" style="left:3.00px;top:332.19px;font-size:6.40px;color:#3a7ac0;transform:scaleX(0.938);">Modello</div>
<div class="t" style="left:28.50px;top:332.19px;font-size:6.40px;color:#333;transform:scaleX(0.909);">Propri</div>
<div class="t" style="left:53.50px;top:332.19px;font-size:6.40px;color:#333;transform:scaleX(0.821);">Relazio</div>
<div class="t" style="left:100.00px;top:55.06px;font-size:6.54px;color:#000;font-weight:bold;transform:scaleX(0.927);">Modello</div>
<div class="t" style="left:134.00px;top:55.06px;font-size:6.54px;color:#333;transform:scaleX(0.851);">Travata 2</div>
<div class="t" style="left:169.50px;top:55.06px;font-size:6.54px;color:#333;transform:scaleX(0.840);">Travata 1</div>
<div class="t" style="left:205.00px;top:55.06px;font-size:6.54px;color:#333;transform:scaleX(0.856);">Pilastrata 2</div>
<div class="r" style="left:79px;top:62px;width:708px;height:278px;background:#d4e4f4;z-index:0;"></div>
<div class="r" style="left:82px;top:64px;width:702px;height:273.5px;background:#000;z-index:0;"></div>
<div class="r" style="left:87px;top:69px;width:64px;height:28px;background:#eeeeee;z-index:2;box-sizing:border-box;border:1px solid #d8d8d8;"></div>
<div class="r" style="left:88.5px;top:77.5px;width:61px;height:0.8px;background:#c8c8c8;z-index:2;"></div>
<div class="r" style="left:88.5px;top:77.5px;width:0.8px;height:18px;background:#c8c8c8;z-index:2;"></div>
<div class="t" style="left:93.00px;top:70.06px;font-size:6.54px;color:#222;transform:scaleX(0.844);">Momento M2 [Nmm]</div>
<div class="t" style="left:90.00px;top:80.06px;font-size:6.54px;color:#222;transform:scaleX(0.890);">Min:</div>
<div class="t" style="left:105.00px;top:80.06px;font-size:6.54px;color:#222;transform:scaleX(0.845);">-8.53e+07 [B:12]</div>
<div class="t" style="left:90.00px;top:88.46px;font-size:6.54px;color:#222;transform:scaleX(0.811);">Max:</div>
<div class="t" style="left:107.50px;top:88.46px;font-size:6.54px;color:#222;transform:scaleX(0.839);">7.29e+07 [B:11]</div>
<div class="t" style="left:2.00px;top:346.26px;font-size:6.54px;color:#333;transform:scaleX(0.772);">Tabelle</div>
<div class="t" style="left:6.73px;top:367.24px;font-size:6.69px;color:#222;transform:scaleX(0.823);">R1</div>
<div class="t" style="left:6.73px;top:376.54px;font-size:6.69px;color:#222;transform:scaleX(0.823);">R2</div>
<div class="t" style="left:6.73px;top:385.84px;font-size:6.69px;color:#222;transform:scaleX(0.823);">R3</div>
<div class="t" style="left:20.42px;top:359.03px;font-size:6.10px;color:#222;transform:scaleX(0.901);">Trave</div>
<div class="t" style="left:25.82px;top:367.24px;font-size:6.69px;color:#222;transform:scaleX(0.823);">1</div>
<div class="t" style="left:25.82px;top:376.54px;font-size:6.69px;color:#222;transform:scaleX(0.823);">2</div>
<div class="t" style="left:25.82px;top:385.84px;font-size:6.69px;color:#222;transform:scaleX(0.823);">3</div>
<div class="t" style="left:41.83px;top:359.03px;font-size:6.10px;color:#222;transform:scaleX(0.901);">Gruppo</div>
<div class="t" style="left:36.70px;top:367.24px;font-size:6.69px;color:#222;transform:scaleX(0.823);">Pilastrata 1</div>
<div class="t" style="left:36.70px;top:376.54px;font-size:6.69px;color:#222;transform:scaleX(0.823);">Pilastrata 2</div>
<div class="t" style="left:36.70px;top:385.84px;font-size:6.69px;color:#222;transform:scaleX(0.823);">Pilastrata 3</div>
<div class="t" style="left:67.69px;top:359.03px;font-size:6.10px;color:#222;transform:scaleX(0.901);">Prop</div>
<div class="t" style="left:71.97px;top:367.24px;font-size:6.69px;color:#222;transform:scaleX(0.823);">3</div>
<div class="t" style="left:71.97px;top:376.54px;font-size:6.69px;color:#222;transform:scaleX(0.823);">3</div>
<div class="t" style="left:71.97px;top:385.84px;font-size:6.69px;color:#222;transform:scaleX(0.823);">3</div>
<div class="t" style="left:82.25px;top:359.03px;font-size:6.10px;color:#222;transform:scaleX(0.901);">Calcestr.</div>
<div class="t" style="left:84.08px;top:367.24px;font-size:6.69px;color:#222;transform:scaleX(0.823);">C25/30</div>
<div class="t" style="left:84.08px;top:376.54px;font-size:6.69px;color:#222;transform:scaleX(0.823);">C25/30</div>
<div class="t" style="left:84.08px;top:385.84px;font-size:6.69px;color:#222;transform:scaleX(0.823);">C25/30</div>
<div class="t" style="left:107.34px;top:359.03px;font-size:6.10px;color:#222;transform:scaleX(0.901);">Acciaio</div>
<div class="t" style="left:107.79px;top:367.24px;font-size:6.69px;color:#222;transform:scaleX(0.823);">B450C</div>
<div class="t" style="left:107.79px;top:376.54px;font-size:6.69px;color:#222;transform:scaleX(0.823);">B450C</div>
<div class="t" style="left:107.79px;top:385.84px;font-size:6.69px;color:#222;transform:scaleX(0.823);">B450C</div>
<div class="t" style="left:128.72px;top:359.03px;font-size:6.10px;color:#222;transform:scaleX(0.901);">Predim./Ver.</div>
<div class="t" style="left:139.88px;top:367.24px;font-size:6.69px;color:#222;transform:scaleX(0.823);">Pil.</div>
<div class="t" style="left:139.88px;top:376.54px;font-size:6.69px;color:#222;transform:scaleX(0.823);">Pil.</div>
<div class="t" style="left:139.88px;top:385.84px;font-size:6.69px;color:#222;transform:scaleX(0.823);">Pil.</div>
<div class="t" style="left:166.63px;top:359.03px;font-size:6.10px;color:#222;transform:scaleX(0.901);">Zcr</div>
<div class="t" style="left:162.19px;top:367.24px;font-size:6.69px;color:#222;transform:scaleX(0.823);">458.00</div>
<div class="t" style="left:162.19px;top:376.54px;font-size:6.69px;color:#222;transform:scaleX(0.823);">458.00</div>
<div class="t" style="left:162.19px;top:385.84px;font-size:6.69px;color:#222;transform:scaleX(0.823);">458.00</div>
<div class="t" style="left:182.42px;top:359.03px;font-size:6.10px;color:#222;transform:scaleX(0.901);">Tipo pil.</div>
<div class="t" style="left:182.00px;top:367.24px;font-size:6.69px;color:#222;transform:scaleX(0.823);">Normale</div>
<div class="t" style="left:182.00px;top:376.54px;font-size:6.69px;color:#222;transform:scaleX(0.823);">Normale</div>
<div class="t" style="left:182.00px;top:385.84px;font-size:6.69px;color:#222;transform:scaleX(0.823);">Normale</div>
<div class="t" style="left:205.21px;top:359.03px;font-size:6.10px;color:#222;transform:scaleX(0.901);">Piano pilastri</div>
<div class="t" style="left:218.20px;top:367.24px;font-size:6.69px;color:#222;transform:scaleX(0.823);">---</div>
<div class="t" style="left:218.20px;top:376.54px;font-size:6.69px;color:#222;transform:scaleX(0.823);">---</div>
<div class="t" style="left:218.20px;top:385.84px;font-size:6.69px;color:#222;transform:scaleX(0.823);">---</div>
<div class="t" style="left:239.82px;top:359.03px;font-size:6.10px;color:#222;transform:scaleX(0.901);">Hcr</div>
<div class="t" style="left:241.35px;top:367.24px;font-size:6.69px;color:#222;transform:scaleX(0.823);">---</div>
<div class="t" style="left:241.35px;top:376.54px;font-size:6.69px;color:#222;transform:scaleX(0.823);">---</div>
<div class="t" style="left:241.35px;top:385.84px;font-size:6.69px;color:#222;transform:scaleX(0.823);">---</div>
<div class="t" style="left:250.73px;top:359.03px;font-size:6.10px;color:#222;transform:scaleX(0.901);">Tipo trave</div>
<div class="t" style="left:259.19px;top:367.24px;font-size:6.69px;color:#222;transform:scaleX(0.823);">----</div>
<div class="t" style="left:259.19px;top:376.54px;font-size:6.69px;color:#222;transform:scaleX(0.823);">----</div>
<div class="t" style="left:259.19px;top:385.84px;font-size:6.69px;color:#222;transform:scaleX(0.823);">----</div>
<div class="t" style="left:277.38px;top:359.03px;font-size:6.10px;color:#222;transform:scaleX(0.901);">Ambiente</div>
<div class="t" style="left:287.47px;top:367.24px;font-size:6.69px;color:#222;transform:scaleX(0.823);">b</div>
<div class="t" style="left:287.47px;top:376.54px;font-size:6.69px;color:#222;transform:scaleX(0.823);">b</div>
<div class="t" style="left:287.47px;top:385.84px;font-size:6.69px;color:#222;transform:scaleX(0.823);">b</div>
<div class="t" style="left:305.00px;top:359.03px;font-size:6.10px;color:#222;transform:scaleX(0.901);">Mrid</div>
<div class="t" style="left:303.47px;top:367.24px;font-size:6.69px;color:#222;transform:scaleX(0.823);">Attivo</div>
<div class="t" style="left:303.47px;top:376.54px;font-size:6.69px;color:#222;transform:scaleX(0.823);">Attivo</div>
<div class="t" style="left:303.47px;top:385.84px;font-size:6.69px;color:#222;transform:scaleX(0.823);">Attivo</div>
<div class="t" style="left:320.46px;top:359.03px;font-size:6.10px;color:#222;transform:scaleX(0.901);">Beta1</div>
<div class="t" style="left:322.30px;top:367.24px;font-size:6.69px;color:#222;transform:scaleX(0.823);">1.00</div>
<div class="t" style="left:322.30px;top:376.54px;font-size:6.69px;color:#222;transform:scaleX(0.823);">1.00</div>
<div class="t" style="left:322.30px;top:385.84px;font-size:6.69px;color:#222;transform:scaleX(0.823);">1.00</div>
<div class="t" style="left:337.76px;top:359.03px;font-size:6.10px;color:#222;transform:scaleX(0.901);">Beta2</div>
<div class="t" style="left:339.60px;top:367.24px;font-size:6.69px;color:#222;transform:scaleX(0.823);">1.00</div>
<div class="t" style="left:339.60px;top:376.54px;font-size:6.69px;color:#222;transform:scaleX(0.823);">1.00</div>
<div class="t" style="left:339.60px;top:385.84px;font-size:6.69px;color:#222;transform:scaleX(0.823);">1.00</div>
<div class="t" style="left:396.08px;top:359.03px;font-size:6.10px;color:#222;transform:scaleX(0.901);">Stato</div>
<div class="t" style="left:354.80px;top:367.24px;font-size:6.69px;color:#222;transform:scaleX(0.823);">Da verificare</div>
<div class="t" style="left:354.80px;top:376.54px;font-size:6.69px;color:#222;transform:scaleX(0.823);">Verificato</div>
<div class="t" style="left:354.80px;top:385.84px;font-size:6.69px;color:#222;transform:scaleX(0.823);">Da verificare</div>
<div class="t" style="left:36.50px;top:396.91px;font-size:6.25px;color:#111;font-weight:bold;transform:scaleX(0.940);">NTC18C-Modello</div>
<div class="t" style="left:50.00px;top:408.54px;font-size:6.69px;color:#b8b8be;transform:scaleX(0.869);">2000.00</div>
<div class="t" style="left:115.50px;top:410.12px;font-size:4.94px;color:#b0b0b8;transform:scaleX(0.964);">Max</div>
<div class="t" style="left:126.30px;top:410.12px;font-size:4.94px;color:#b0b0b8;transform:scaleX(1.218);">Min</div>
<div class="t" style="left:143.00px;top:408.89px;font-size:6.40px;color:#b8b8c0;transform:scaleX(0.959);">V1</div>
<div class="t" style="left:154.00px;top:408.89px;font-size:6.40px;color:#b8b8c0;transform:scaleX(0.901);">M1</div>
<div class="t" style="left:166.00px;top:408.89px;font-size:6.40px;color:#b8b8c0;transform:scaleX(1.023);">V2</div>
<div class="t" style="left:178.00px;top:408.89px;font-size:6.40px;color:#b8b8c0;transform:scaleX(0.901);">M2</div>
<div class="t" style="left:190.00px;top:408.89px;font-size:6.40px;color:#b8b8c0;transform:scaleX(0.795);">AF</div>
<div class="t" style="left:201.00px;top:408.89px;font-size:6.40px;color:#b8b8c0;transform:scaleX(0.975);">MT</div></body></html>
